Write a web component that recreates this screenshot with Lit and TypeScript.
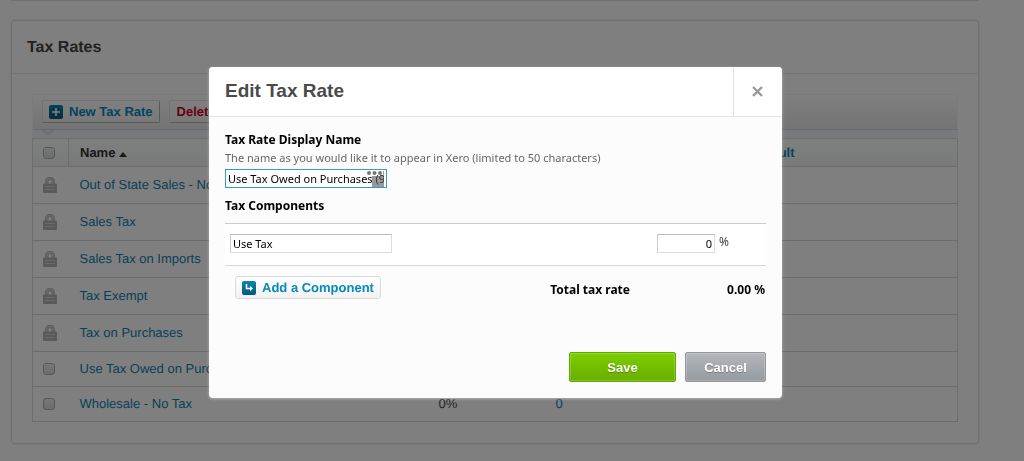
import { LitElement, html, css, svg } from "lit";
import { customElement, property } from "lit/decorators.js";

interface TaxRate {
  name: string;
  rate?: string;
  accounts?: number;
  locked: boolean;
}

const RATES: TaxRate[] = [
  { name: "Out of State Sales - No Tax", locked: true },
  { name: "Sales Tax", locked: true },
  { name: "Sales Tax on Imports", locked: true },
  { name: "Tax Exempt", locked: true },
  { name: "Tax on Purchases", locked: true },
  { name: "Use Tax Owed on Purchases", locked: false },
  { name: "Wholesale - No Tax", rate: "0%", accounts: 0, locked: false },
];

const plusShape = svg`<path d="M7 3v8M3 7h8" stroke="#fff" stroke-width="1.6" fill="none"/>`;
const arrowShape = svg`<path d="M4.500 3v4.500h4" stroke="#fff" stroke-width="1.500" fill="none"/><path d="M8 4.800l3 2.700-3 2.700z" fill="#fff"/>`;

const tile = (shape: unknown) => html`<svg class="tile" width="14" height="14" viewBox="0 0 14 14" aria-hidden="true">
  <defs><linearGradient id="tileFill" x1="0" y1="0" x2="0" y2="1"><stop offset="0" stop-color="#0a86a8"/><stop offset="1" stop-color="#04587c"/></linearGradient></defs>
  <rect width="14" height="14" rx="2" fill="url(#tileFill)"/>${shape}
</svg>`;

const padlock = html`<svg class="lock" width="14" height="16" viewBox="0 0 14 16" role="img" aria-label="Locked">
  <path d="M3.800 8V4.500a3.200 3.200 0 0 1 6.400 0V8" fill="none" stroke="#b4b4b4" stroke-width="3.400"/>
  <path d="M3.800 8V4.500a3.200 3.200 0 0 1 6.400 0V8" fill="none" stroke="#d0d0d0" stroke-width="1.800"/>
  <rect y="6.500" width="14" height="9.500" rx="1" fill="#b4b4b4"/>
  <path d="M2 9.500h10M2 12.500h10" stroke="#d4d4d4" stroke-width="1"/>
</svg>`;

@customElement("tax-rates-panel")
export class TaxRatesPanel extends LitElement {
  @property({ attribute: false }) rates: TaxRate[] = [];

  static styles = css`
    :host { display: block; font: 13px/18px "Liberation Sans", Arial, sans-serif; text-rendering: geometricPrecision; color: #4a4a4a; }
    .panel { border: 1px solid #e3e3e3; border-radius: 4px; background: #fff; box-shadow: 0 0 2px #d0d0d0; }
    .heading { margin: 0; padding: 17px 15px 15px; border-bottom: 1px solid #e8e8e8; font-size: 16px; line-height: 20px; color: #444; }
    .body { padding: 20px 20px 21px 20px; }
    .toolbar { display: flex; gap: 9px; padding: 5px 9px 6px; border: 1px solid #f6f6f6; border-bottom-color: #d4d6de; background: linear-gradient(#fff, #e8e8e8); }
    .button { display: flex; align-items: center; gap: 6px; height: 23px; padding: 0 6px; border: 1px solid #e2e2e2; border-right-color: #b4b4b4; border-bottom-color: #b4b4b4; border-radius: 2px; background: linear-gradient(#fff, #f2f2f2); font: bold 13px/18px "Liberation Sans", Arial, sans-serif; text-rendering: geometricPrecision; color: #048abd; }
    .button.danger { padding: 0 7px; color: #d0021b; }
    .tile { display: block; flex: none; }
    .notch { display: flex; height: 8px; padding-left: 9px; background: #f1f2fb; }
    .notch svg { display: block; }
    .grid { width: 100%; table-layout: fixed; border-collapse: collapse; border: 1px solid #dcdcdc; }
    .grid th, .grid td { padding: 0; text-align: left; vertical-align: middle; }
    .grid tr { border-bottom: 1px solid #d8d8d8; }
    .head th { height: 27px; background: linear-gradient(#fcfdfd, #f2f5f5); }
    .head .mark { border-right: 1px solid #dcdcdc; }
    .row td { height: 34px; }
    .row.locked td { height: 36px; }
    .grid .mark { padding-left: 10px; }
    .grid .name { padding-left: 11px; white-space: nowrap; }
    .mark-col { width: 36px; }
    .name-col { width: 40%; }
    .rate-col { width: 117px; }
    .count-col { width: 195px; }
    .dark { color: #333; }
    .link { color: #048abd; text-decoration: none; }
    .row .link { color: #0f82ae; }
    .check { display: block; appearance: none; width: 12px; height: 12px; margin: 0; border: 1px solid #b0b0b0; border-radius: 3px; background: linear-gradient(#f0f0f0, #d8d8d8); }
    .lock { display: block; }
  `;

  render() {
    return html`<section class="panel">
      <h2 class="heading">Tax Rates</h2>
      <div class="body">
        <div class="toolbar">
          <button class="button" type="button">${tile(plusShape)}New Tax Rate</button>
          <button class="button danger" type="button">Delete</button>
        </div>
        <div class="notch"><svg width="14" height="5" viewBox="0 0 14 5" aria-hidden="true"><path d="M0 0h14L7 5z" fill="#e8e8e8"/><path d="M1 0l6 5 6-5" fill="none" stroke="#d4d6de"/></svg></div>
        <table class="grid">
          <colgroup><col class="mark-col"><col class="name-col"><col class="rate-col"><col class="count-col"><col></colgroup>
          <thead>
            <tr class="head">
              <th class="mark"><input class="check" type="checkbox" aria-label="Select all"></th>
              <th class="name dark">Name <svg width="8" height="5" viewBox="0 0 8 5" aria-hidden="true"><path d="M0 5h8L4 0z" fill="#333"/></svg></th>
              <th></th>
              <th></th>
              <th><a class="link" href="#">Default</a></th>
            </tr>
          </thead>
          <tbody>
            ${this.rates.map((r) => html`<tr class="row ${r.locked ? "locked" : ""}">
              <td class="mark">${r.locked ? padlock : html`<input class="check" type="checkbox" aria-label=${r.name}>`}</td>
              <td class="name"><a class="link" href="#">${r.name}</a></td>
              <td>${r.rate}</td>
              <td><a class="link" href="#">${r.accounts}</a></td>
              <td></td>
            </tr>`)}
          </tbody>
        </table>
      </div>
    </section>`;
  }
}

@customElement("tax-rate-dialog")
export class TaxRateDialog extends LitElement {
  static styles = css`
    :host { display: block; font: 11px/18px "Noto Sans", Tahoma, sans-serif; color: #000; }
    .dialog { border-radius: 4px; background: #fcfcfc; box-shadow: 0 1px 3px rgba(255, 255, 255, .4); overflow: hidden; }
    .top { display: flex; height: 49px; border-bottom: 1px solid #e6e6e6; background: #fff; }
    .title { flex: 1; margin: 0; padding-left: 16px; font: bold 19px/48px "Liberation Sans", Arial, sans-serif; color: #4a4a4a; }
    .close { display: grid; place-items: center; width: 49px; padding: 0 2px 0 0; border: 0; border-left: 1px solid #e2e2e2; background: none; }
    .content { padding: 14px 16px 16px; }
    .label { display: block; font-size: 12px; font-weight: bold; }
    .hint { margin: 0 0 3px; line-height: 17px; color: #666; }
    .field { position: relative; width: 162px; margin-bottom: 9px; }
    .input { display: block; box-sizing: border-box; width: 162px; height: 19px; padding: 0 2px 1px; border: 1px solid #dcdcdc; border-top-color: #bbb; border-left-color: #ccc; border-radius: 0; outline: none; background: #fff; font: 11px/16px "Noto Sans", Tahoma, sans-serif; color: #000; }
    .input.active { border-color: #2f9fc9; }
    .input.percent { width: 58px; text-align: right; }
    .filler { position: absolute; right: 2px; top: 1px; }
    .component { display: flex; align-items: center; justify-content: space-between; height: 39px; margin-top: 8px; padding: 0 37px 2px 5px; border-top: 1px solid #ccc; border-bottom: 1px solid #d5d8dc; background: #fff; }
    .amount { display: flex; gap: 4px; font-size: 12px; line-height: 16px; color: #444; }
    .total { display: flex; align-items: center; padding: 10px 1px 0 10px; font-size: 12px; font-weight: bold; }
    .total-name { margin-left: auto; padding-top: 4px; }
    .total-value { width: 135px; padding-top: 4px; text-align: right; }
    .add { display: flex; align-items: center; gap: 6px; height: 23px; padding: 0 6px; border: 1px solid #d9d9d9; border-radius: 3px; background: linear-gradient(#fff, #f2f2f2); font: bold 13px/18px "Liberation Sans", Arial, sans-serif; text-rendering: geometricPrecision; color: #048abd; }
    .tile { display: block; }
    .actions { display: flex; justify-content: flex-end; gap: 9px; margin-top: 53px; }
    .action { height: 30px; padding: 2px 0 0; border-radius: 2px; font: bold 13px/18px "Liberation Sans", Arial, sans-serif; color: #fff; text-shadow: 0 1px 1px rgba(0, 0, 0, .25); }
    .save { width: 107px; border: 1px solid #62a800; background: linear-gradient(#7ccf00, #68ae00); box-shadow: inset 0 0 0 1px rgba(255, 255, 255, .2); }
    .cancel { width: 81px; border: 1px solid #93989d; background: linear-gradient(#b3b7bc, #969b9f); box-shadow: inset 0 0 0 1px rgba(255, 255, 255, .2); }
  `;

  render() {
    return html`<form class="dialog" role="dialog" aria-labelledby="title">
      <header class="top">
        <h1 class="title" id="title">Edit Tax Rate</h1>
        <button class="close" type="button" aria-label="Close"><svg width="11" height="11" viewBox="0 0 11 11" aria-hidden="true"><path d="M1 1l9 9M10 1l-9 9" stroke="#999" stroke-width="2.400"/></svg></button>
      </header>
      <div class="content">
        <label class="label" for="display-name">Tax Rate Display Name</label>
        <p class="hint">The name as you would like it to appear in Xero (limited to 50 characters)</p>
        <div class="field">
          <input class="input active" id="display-name" type="text" value="Use Tax Owed on Purchases (9%)">
          <svg class="filler" width="18" height="17" viewBox="0 0 18 17" aria-hidden="true">
            <path d="M5 6h12v11H5z" fill="#555" fill-opacity=".6"/>
            <g fill="#777"><circle cx="2" cy="3" r="2"/><circle cx="7.500" cy="3" r="2"/><circle cx="13" cy="3" r="2"/></g>
            <path d="M16.500 1v5" stroke="#999"/>
          </svg>
        </div>
        <span class="label">Tax Components</span>
        <div class="component">
          <input class="input" type="text" value="Use Tax" aria-label="Component name">
          <label class="amount"><input class="input percent" type="text" value="0" aria-label="Component rate">%</label>
        </div>
        <div class="total">
          <button class="add" type="button">${tile(arrowShape)}Add a Component</button>
          <span class="total-name">Total tax rate</span>
          <span class="total-value">0.00 %</span>
        </div>
        <div class="actions">
          <button class="action save" type="button">Save</button>
          <button class="action cancel" type="button">Cancel</button>
        </div>
      </div>
    </form>`;
  }
}

@customElement("app-root")
export class AppRoot extends LitElement {
  static styles = css`
    :host { display: block; }
    .page { min-height: 100vh; box-sizing: border-box; padding: 0 45px 17px 11px; background: #fff; }
    .previous { height: 0; margin-bottom: 19px; border-bottom: 1px solid #dcdcdc; border-radius: 0 0 4px 4px; }
    .overlay { position: fixed; inset: 0; display: flex; align-items: flex-start; justify-content: center; padding: 67px 33px 0 0; background: rgba(0, 0, 0, .5); }
    .modal { width: 573px; max-width: 100%; }
  `;

  render() {
    return html`<main class="page">
        <div class="previous"></div>
        <tax-rates-panel .rates=${RATES}></tax-rates-panel>
      </main>
      <div class="overlay"><tax-rate-dialog class="modal"></tax-rate-dialog></div>`;
  }
}
